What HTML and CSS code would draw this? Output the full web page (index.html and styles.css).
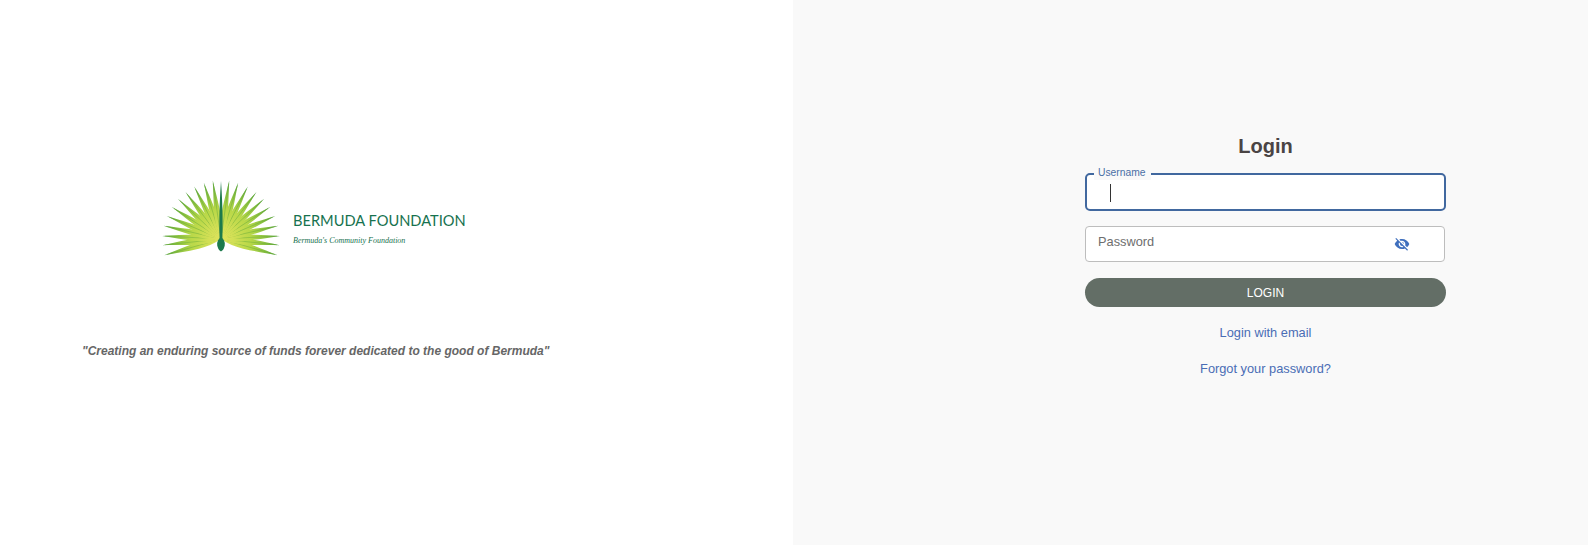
FILE: index.html
```html
<!DOCTYPE html>
<html lang="en">

<head>
    <meta charset="utf-8">
    <meta name="viewport" content="width=device-width, initial-scale=1.0">
    <title>Login</title>

    <link rel="stylesheet" href="styles.css">

</head>

<body>

    <section class="intro">
        <div class="logo">
            <svg class="fan" width="124" height="76" viewBox="-62 -59 124 76">
                <defs>
                    <linearGradient id="leaf" gradientUnits="userSpaceOnUse" x1="0" y1="0" x2="0" y2="-59">
                        <stop offset="0.1" stop-color="#dbe25a" />
                        <stop offset="0.5" stop-color="#b9d848" />
                        <stop offset="0.8" stop-color="#82bd40" />
                        <stop offset="1" stop-color="#469a40" />
                    </linearGradient>
                    <g id="frond">
                        <path d="M0 0C-2.6 -8 -3.6 -16 -3.2 -24C-2.6 -36 -1 -48 0 -59C1 -48 2.6 -36 3.2 -24C3.6 -16 2.6 -8 0 0Z" fill="url(#leaf)" />
                        <path d="M0 -6L0 -56" fill="none" stroke="#6fae3c" stroke-width=".5" />
                    </g>
                </defs>
                <use href="#frond" transform="rotate(-106)" />
                <use href="#frond" transform="rotate(-96)" />
                <use href="#frond" transform="rotate(-87)" />
                <use href="#frond" transform="rotate(-77)" />
                <use href="#frond" transform="rotate(-67)" />
                <use href="#frond" transform="rotate(-57)" />
                <use href="#frond" transform="rotate(-47)" />
                <use href="#frond" transform="rotate(-37)" />
                <use href="#frond" transform="rotate(-27)" />
                <use href="#frond" transform="rotate(-17)" />
                <use href="#frond" transform="rotate(-8)" />
                <use href="#frond" transform="rotate(106)" />
                <use href="#frond" transform="rotate(96)" />
                <use href="#frond" transform="rotate(87)" />
                <use href="#frond" transform="rotate(77)" />
                <use href="#frond" transform="rotate(67)" />
                <use href="#frond" transform="rotate(57)" />
                <use href="#frond" transform="rotate(47)" />
                <use href="#frond" transform="rotate(37)" />
                <use href="#frond" transform="rotate(27)" />
                <use href="#frond" transform="rotate(17)" />
                <use href="#frond" transform="rotate(8)" />
                <path d="M0 -58C-2 -30 -1.8 -12 -1.4 -1C-4.2 2 -4.6 6 -2.8 9.5C-1.8 11.4 -.8 12 0 12.4C.8 12 1.8 11.4 2.8 9.5C4.6 6 4.2 2 1.4 -1C1.8 -12 2 -30 0 -58Z" fill="#1c7a4c" />
            </svg>
            <div class="logo_tekst">
                <p class="logo_navn">BERMUDA FOUNDATION</p>
                <p class="logo_sub">Bermuda's Community Foundation</p>
            </div>
        </div>
        <p class="citat">"Creating an enduring source of funds forever dedicated to the good of Bermuda"</p>
    </section>

    <section class="login">
        <form class="login_form">
            <h1>Login</h1>

            <div class="felt aktiv">
                <label for="username">Username</label>
                <span class="caret"></span>
                <input id="username" type="text">
            </div>

            <div class="felt">
                <input id="password" type="password" placeholder="Password">
                <svg class="oje" width="16" height="16" viewBox="0 0 24 24">
                    <path fill="#3f6fbd" d="M12 7c2.76 0 5 2.24 5 5 0 .65-.13 1.26-.36 1.83l2.92 2.92c1.51-1.26 2.7-2.89 3.43-4.75-1.73-4.39-6-7.5-11-7.5-1.4 0-2.74.25-3.98.7l2.16 2.16C10.74 7.13 11.35 7 12 7zM2 4.27l2.28 2.28.46.46C3.08 8.3 1.78 10.02 1 12c1.73 4.39 6 7.5 11 7.5 1.55 0 3.03-.3 4.38-.84l.42.42L19.73 22 21 20.73 3.27 3 2 4.27zM7.53 9.8l1.55 1.55c-.05.21-.08.43-.08.65 0 1.66 1.34 3 3 3 .22 0 .44-.03.65-.08l1.55 1.55c-.67.33-1.41.53-2.2.53-2.76 0-5-2.24-5-5 0-.79.2-1.53.53-2.2zm4.31-.78l3.15 3.15.02-.16c0-1.66-1.34-3-3-3l-.17.01z" />
                </svg>
            </div>

            <button class="knap" type="button">LOGIN</button>

            <a class="link" href="#">Login with email</a>
            <a class="link" href="#">Forgot your password?</a>
        </form>
    </section>

</body></html>
```

FILE: styles.css
```css
html {
    background-color: white;
}

body {
    margin: 0;
    height: 545px;
    display: grid;
    grid-template-columns: 793px 795px;
    font-family: "Liberation Sans", Arial, sans-serif;
    overflow: hidden;
}

.intro {
    padding: 180px 0 0 82px;
    width: 467px;
}

.logo {
    display: flex;
    align-items: flex-start;
    padding-left: 77px;
}

.fan {
    display: block;
}

.logo_tekst {
    margin: 31px 0 0 10px;
    color: #17724f;
}

.logo_navn {
    margin: 0;
    font-family: Lato, sans-serif;
    font-size: 14.65px;
    line-height: 19px;
    white-space: nowrap;
}

.logo_sub {
    margin: 5px 0 0;
    font-family: "Liberation Serif", serif;
    font-style: italic;
    font-size: 8px;
    line-height: 12px;
}

.citat {
    margin: 88px 0 0;
    color: #666;
    font-size: 12px;
    line-height: 14px;
    font-weight: bold;
    font-style: italic;
    text-align: center;
    white-space: nowrap;
}

.login {
    background-color: #f9f9f9;
    padding: 132px 142px 0 0;
    display: flex;
    justify-content: flex-end;
    align-items: flex-start;
}

.login_form {
    width: 361px;
    display: flex;
    flex-direction: column;
}

h1 {
    margin: 0 0 12px;
    text-align: center;
    font-size: 20px;
    line-height: 29px;
    color: #4a4444;
}

.felt {
    position: relative;
    height: 36px;
    margin: 0 1px 16px 0;
    box-sizing: border-box;
    border: 1px solid #bdbdbd;
    border-radius: 4px;
    background-color: white;
}

.felt input {
    display: block;
    box-sizing: border-box;
    width: 100%;
    height: 100%;
    padding: 0 50px 6px 12px;
    border: 0;
    outline: 0;
    background: none;
    font-family: inherit;
    font-size: 12.8px;
}

.felt input::placeholder {
    color: #6e6e6e;
    opacity: 1;
}

.aktiv {
    height: 38px;
    margin: 0 0 15px;
    border: 2px solid #41689f;
    border-radius: 5px;
}

.aktiv label {
    position: absolute;
    top: -9px;
    left: 7px;
    padding: 0 5px 0 4px;
    background-color: #f9f9f9;
    color: #4a6fa5;
    font-size: 10.3px;
    line-height: 14px;
}

.caret {
    position: absolute;
    top: 9px;
    left: 23px;
    width: 1px;
    height: 18px;
    background-color: #333;
}

.oje {
    position: absolute;
    top: 9px;
    right: 34px;
}

.knap {
    height: 29px;
    margin-bottom: 18px;
    border: 0;
    border-radius: 15px;
    background-color: #636e66;
    color: white;
    font-family: inherit;
    font-size: 12px;
    padding: 0;
}

.link {
    display: block;
    text-align: center;
    text-decoration: none;
    color: #4a6db5;
    font-size: 12.8px;
    line-height: 16px;
    margin-bottom: 20px;
}
```
